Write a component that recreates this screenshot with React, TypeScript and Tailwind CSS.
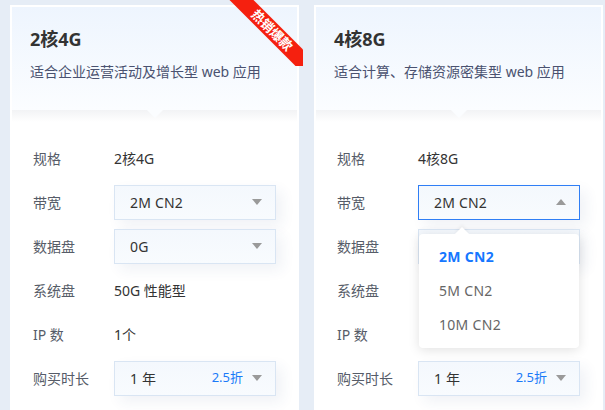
import React from "react";

const FONT = { fontFamily: '"Noto Sans", "Noto Sans CJK SC", sans-serif' };

type Row =
  | { label: string; kind: "text"; value: string }
  | { label: string; kind: "select"; value: string; extra?: string; open?: boolean; options?: string[] };

type Plan = {
  title: string;
  desc: string;
  hot?: boolean;
  rows: Row[];
};

const plans: Plan[] = [
  {
    title: "2核4G",
    desc: "适合企业运营活动及增长型 web 应用",
    hot: true,
    rows: [
      { label: "规格", kind: "text", value: "2核4G" },
      { label: "带宽", kind: "select", value: "2M CN2" },
      { label: "数据盘", kind: "select", value: "0G" },
      { label: "系统盘", kind: "text", value: "50G 性能型" },
      { label: "IP 数", kind: "text", value: "1个" },
      { label: "购买时长", kind: "select", value: "1 年", extra: "2.5折" },
    ],
  },
  {
    title: "4核8G",
    desc: "适合计算、存储资源密集型 web 应用",
    rows: [
      { label: "规格", kind: "text", value: "4核8G" },
      { label: "带宽", kind: "select", value: "2M CN2", open: true, options: ["2M CN2", "5M CN2", "10M CN2"] },
      { label: "数据盘", kind: "select", value: "0G" },
      // values under the open dropdown are covered, so left empty
      { label: "系统盘", kind: "text", value: "" },
      { label: "IP 数", kind: "text", value: "" },
      { label: "购买时长", kind: "select", value: "1 年", extra: "2.5折" },
    ],
  },
];

function Caret({ up }: { up?: boolean }) {
  return up ? (
    <span className="w-0 h-0 border-l-[5px] border-r-[5px] border-b-[6px] border-l-transparent border-r-transparent border-b-[#9a9a9a]" />
  ) : (
    <span className="w-0 h-0 border-l-[5px] border-r-[5px] border-t-[6px] border-l-transparent border-r-transparent border-t-[#9a9a9a]" />
  );
}

function Select({ row }: { row: Extract<Row, { kind: "select" }> }) {
  return (
    <div className="relative">
      <div
        className={`w-[162px] h-[35px] flex items-center justify-between pl-[15px] pr-[13px] border bg-gradient-to-b from-[#f4f8fd] to-[#f8fbfe] shadow-[6px_6px_14px_rgba(40,70,130,0.07)] ${
          row.open ? "border-[#2f7ef5]" : "border-[#d9e5f3]"
        }`}
      >
        <span className="text-[14px] tracking-[0.2px] text-[#333]">{row.value}</span>
        <div className="flex items-center gap-[9px]">
          {row.extra && <span className="text-[13px] text-[#1a7af8]">{row.extra}</span>}
          <Caret up={row.open} />
        </div>
      </div>

      {row.open && row.options && (
        <div className="absolute left-[1px] top-[49px] z-20 w-[160px] bg-white rounded-[4px] shadow-[0_2px_12px_rgba(0,0,0,0.12)] py-[6px]">
          <span className="absolute -top-[5px] left-[38px] w-[10px] h-[10px] bg-white rotate-45 shadow-[-2px_-2px_3px_rgba(0,0,0,0.04)]" />
          {row.options.map((opt, i) => (
            <div
              key={opt}
              className={`relative h-[34px] flex items-center pl-[20px] text-[14px] tracking-[0.3px] ${
                i === 0 ? "text-[#1677ff] font-bold" : "text-[#666]"
              }`}
            >
              {opt}
            </div>
          ))}
        </div>
      )}
    </div>
  );
}

function Ribbon() {
  return (
    <div className="absolute -top-[5px] -right-[4px] w-[74px] h-[66px] overflow-hidden z-10">
      <div className="absolute left-[-13px] top-[22px] w-[112px] h-[17px] bg-[#f5200f] rotate-45 flex items-center justify-center">
        <span className="text-[13px] font-bold text-white leading-none">热销爆款</span>
      </div>
    </div>
  );
}

function PlanCard({ plan }: { plan: Plan }) {
  return (
    <div className="relative w-[289px] shrink-0 bg-white p-[2px]">
      {plan.hot && <Ribbon />}

      {/* header */}
      <div className="relative h-[103px] px-[18px] pt-[19px] bg-gradient-to-b from-[#eef5fe] to-[#fbfdff]">
        <div className="text-[18px] font-bold leading-[26px] text-[#333]">{plan.title}</div>
        <div className="mt-[10px] text-[14px] leading-[20px] text-[#4a5270]">{plan.desc}</div>
        <span className="absolute left-[135px] -bottom-[8px] z-[1] w-0 h-0 border-l-[8px] border-r-[8px] border-t-[8px] border-l-transparent border-r-transparent border-t-[#fbfdff]" />
      </div>

      {/* body */}
      <div className="relative bg-gradient-to-b from-[#f2f3f5] via-white to-white bg-[length:100%_24px] bg-no-repeat pt-[26px] px-[21px]">
        {plan.rows.map((row) => (
          <div key={row.label} className="h-[44px] flex items-center">
            <div className="w-[81px] text-[14px] text-[#565c68]">{row.label}</div>
            {row.kind === "text" ? (
              <div className="text-[14px] text-[#333]">{row.value}</div>
            ) : (
              <Select row={row} />
            )}
          </div>
        ))}
        <div className="h-[40px]" />
      </div>
    </div>
  );
}

export default function App() {
  return (
    <div style={FONT} className="w-[605px] h-[410px] overflow-hidden bg-[#e6edf6] flex gap-[15px] pl-[10px] pt-[5px]">
      {plans.map((p) => (
        <PlanCard key={p.title} plan={p} />
      ))}
    </div>
  );
}
